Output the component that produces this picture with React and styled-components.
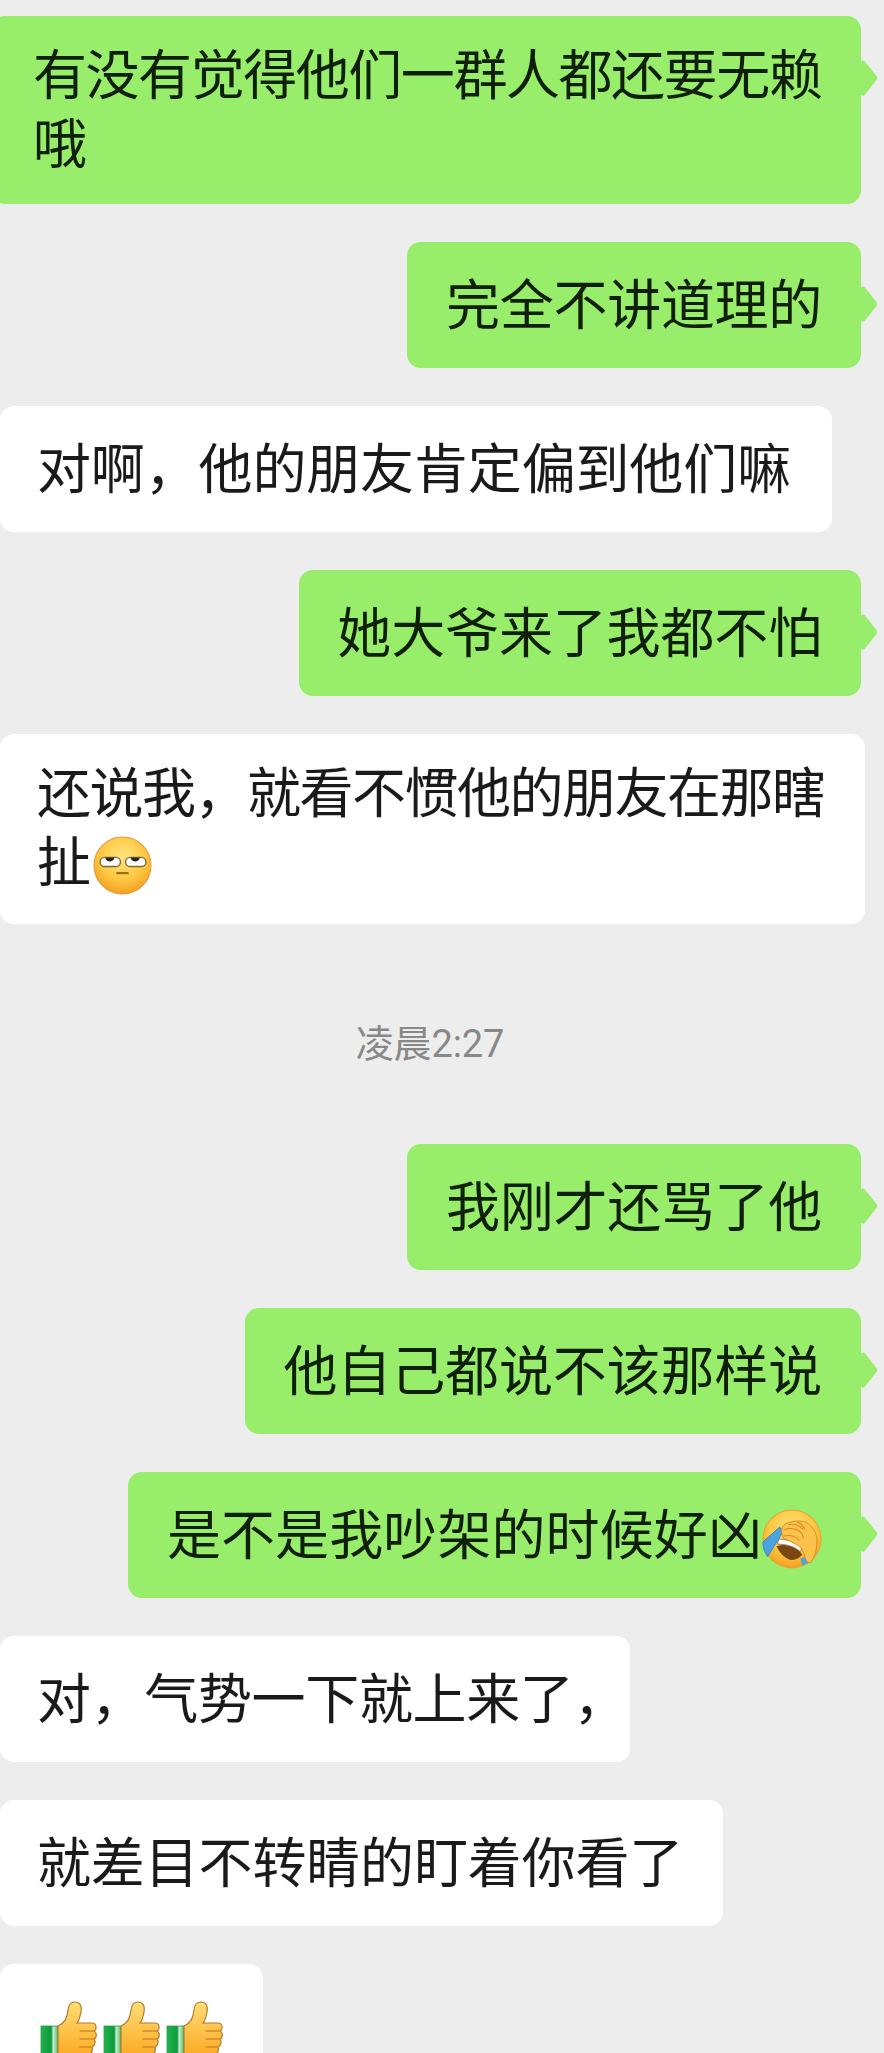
import React from "react";
import styled, { createGlobalStyle } from "styled-components";

const Global = createGlobalStyle`
  html, body { margin: 0; padding: 0; background: #ededed; }
  html, body, #root { height: 2053px; overflow: hidden; }
`;

const Page = styled.main`
  width: 884px;
  height: 2053px;
  overflow: hidden;
  background: #ededed;
  display: flex;
  flex-direction: column;
  gap: 38px;
  padding-top: 16px;
  box-sizing: border-box;
  font-family: "Noto Sans CJK SC", "Noto Sans", sans-serif;
`;

const Bubble = styled.div`
  position: relative;
  box-sizing: border-box;
  min-height: 126px;
  display: flex;
  align-items: center;
  flex-wrap: wrap;
  flex-shrink: 0;
  padding: 21px ${(p) => p.$right ?? 39}px ${(p) => p.$bottom ?? 29}px ${(p) => p.$left ?? 37}px;
  border-radius: 14px;
  font-size: 54px;
  line-height: 69px;
  font-weight: 400;
  letter-spacing: ${(p) => p.$spacing ?? -0.15}px;
  white-space: nowrap;
  color: ${(p) => (p.$mine ? "#0f1f08" : "#1a1a1a")};
  background: ${(p) => (p.$mine ? "#98ed6b" : "#ffffff")};
  align-self: ${(p) => (p.$mine ? "flex-end" : "flex-start")};
  margin-right: ${(p) => (p.$mine ? "23px" : "0")};
  width: ${(p) => (p.$width ? `${p.$width}px` : "auto")};

  ${(p) =>
    p.$mine &&
    `&::after {
      content: "";
      position: absolute;
      right: -14px;
      top: 50px;
      width: 24px;
      height: 24px;
      background: #98ed6b;
      border-radius: 3px;
      transform: rotate(45deg) skew(6deg, 6deg);
    }`}
`;

const Line = styled.span`
  display: flex;
  align-items: center;
  width: 100%;
`;

const TimeRow = styled.div`
  text-align: center;
  margin: 57px 0 37px;
  padding-right: 24px;
  height: 50px;
  flex-shrink: 0;
  line-height: 50px;
  font-size: 38px;
  letter-spacing: -0.1px;
  color: #888888;
  font-family: "Roboto", "Noto Sans CJK SC", sans-serif;
`;

const Emoji = styled.svg`
  width: ${(p) => p.$size ?? 58}px;
  height: ${(p) => p.$size ?? 58}px;
  flex-shrink: 0;
  margin: ${(p) => p.$drop ?? 0}px 0 ${(p) => -(p.$drop ?? 0)}px ${(p) => p.$gap ?? 0}px;
`;

const EmojiRow = styled.span`
  display: flex;
  gap: 5px;
  margin: 13px 0 0 3px;
`;

const Defs = () => (
  <svg width="0" height="0" style={{ position: "absolute" }}>
    <defs>
      <radialGradient id="face" cx="50%" cy="35%" r="68%">
        <stop offset="0" stopColor="#ffe680" />
        <stop offset="0.6" stopColor="#fdc640" />
        <stop offset="1" stopColor="#f29a1e" />
      </radialGradient>
      <linearGradient id="thumb" x1="0" y1="0" x2="0" y2="1">
        <stop offset="0" stopColor="#ffdd77" />
        <stop offset="1" stopColor="#fbab25" />
      </linearGradient>
      <linearGradient id="sleeve" x1="0" y1="0" x2="1" y2="0">
        <stop offset="0" stopColor="#22b24c" />
        <stop offset="0.6" stopColor="#0e9a3c" />
        <stop offset="0.72" stopColor="#c9ecd0" />
        <stop offset="1" stopColor="#4fc06c" />
      </linearGradient>
    </defs>
  </svg>
);

const RollFace = (props) => (
  <Emoji viewBox="0 0 58 58" {...props}>
    <circle cx="29" cy="29" r="28" fill="url(#face)" stroke="#e39a3a" strokeWidth="1" />
    <rect x="7" y="21" width="20" height="9" rx="4.5" fill="#fff" stroke="#7b6a3a" strokeWidth="1.4" />
    <rect x="32" y="21" width="20" height="9" rx="4.5" fill="#fff" stroke="#7b6a3a" strokeWidth="1.4" />
    <path d="M12 21.5h9c-.6 2.6-2.4 3.6-4.5 3.6S12.6 24 12 21.5Z" fill="#222" />
    <path d="M37 21.5h9c-.6 2.6-2.4 3.6-4.5 3.6S37.6 24 37 21.5Z" fill="#222" />
    <path d="M24 36.5h10" stroke="#a66a12" strokeWidth="2.4" strokeLinecap="round" />
  </Emoji>
);

const FacePalm = (props) => (
  <Emoji viewBox="0 0 58 58" {...props}>
    <circle cx="29" cy="29" r="28" fill="url(#face)" stroke="#e8a33c" strokeWidth="1" />
    <path d="M14 36c9-3 18-1 25 8-3 4-8 6-12 5-6-2-10-7-13-13Z" fill="#7a4612" />
    <path d="M16 29c8 0 17 3 23 8l-2 4c-6-5-14-7-22-7Z" fill="#fff" stroke="#6b3d10" strokeWidth="0.6" />
    <path d="M17 17.5l4 3.5L5.5 46C2.5 42 .6 37 .8 32Z" fill="#4aa3e3" stroke="#2e78ba" strokeWidth="0.7" />
    <path d="M37 48l5-2 3 6c-2 1-4 2-6 2.5Z" fill="#4aa3e3" />
    <path d="M19 21c0-4 3-7 7-8 3-1 9-2 14-1 7 2 12 9 13 16 .6 8-1 17-6 24-3 0-4-2-5-4-1-4-2-7-4-10-4-4-11-7-16-9-2-1-3-4-3-8Z" fill="#fcc24b" stroke="#d68a22" strokeWidth="0.9" />
    <path d="M22 20c5-2 11-1 15 2 2 2 3 4 3 6M26 15c5-1 10 1 13 4M34 12.5c3 1 6 4 7 7M21 26c5-1 11 0 15 4" stroke="#d68a22" strokeWidth="1" fill="none" strokeLinecap="round" />
  </Emoji>
);

const Thumb = () => (
  <Emoji viewBox="0 0 58 58">
    <rect x="1" y="25" width="17" height="33" fill="url(#sleeve)" stroke="#2c9e52" strokeWidth="0.8" />
    <path d="M18 25c7-3 9-8 10-16 .5-5 3-8 7-8 5 0 7 4 6 10-1 5-2 9-4 11h15c5 0 5 7 2 8 3 1 3 7 0 8 2 2 1 7-2 8 1 3 0 7-4 8H18Z" fill="url(#thumb)" stroke="#b5792c" strokeWidth="1.2" />
    <path d="M40 30h13M40 38h14M40 46h11" stroke="#d68a2a" strokeWidth="1.4" strokeLinecap="round" />
  </Emoji>
);

export default function App() {
  return (
    <Page>
      <Global />
      <Defs />
      <Bubble $mine $width={870} $left={42} $spacing={-1.45}>
        <Line>有没有觉得他们一群人都还要无赖</Line>
        <Line>哦</Line>
      </Bubble>
      <Bubble $mine $left={39} $spacing={-0.3}>完全不讲道理的</Bubble>
      <Bubble $right={41}>对啊，他的朋友肯定偏到他们嘛</Bubble>
      <Bubble $mine $left={38}>她大爷来了我都不怕</Bubble>
      <Bubble $spacing={-1.5} $width={865} $bottom={31}>
        <Line>还说我，就看不惯他的朋友在那瞎</Line>
        <Line>
          扯<RollFace $gap={3} $size={59} $drop={7} />
        </Line>
      </Bubble>
      <TimeRow>凌晨2:27</TimeRow>
      <Bubble $mine $left={39} $spacing={-0.3}>我刚才还骂了他</Bubble>
      <Bubble $mine $left={39}>他自己都说不该那样说</Bubble>
      <Bubble $mine $left={39} $spacing={0.1}>
        <Line>
          是不是我吵架的时候好凶
          <FacePalm $size={60} $drop={8} />
        </Line>
      </Bubble>
      <Bubble $right={3} $spacing={-0.35}>对，气势一下就上来了，</Bubble>
      <Bubble $right={40}>就差目不转睛的盯着你看了</Bubble>
      <Bubble>
        <EmojiRow>
          <Thumb />
          <Thumb />
          <Thumb />
        </EmojiRow>
      </Bubble>
    </Page>
  );
}
